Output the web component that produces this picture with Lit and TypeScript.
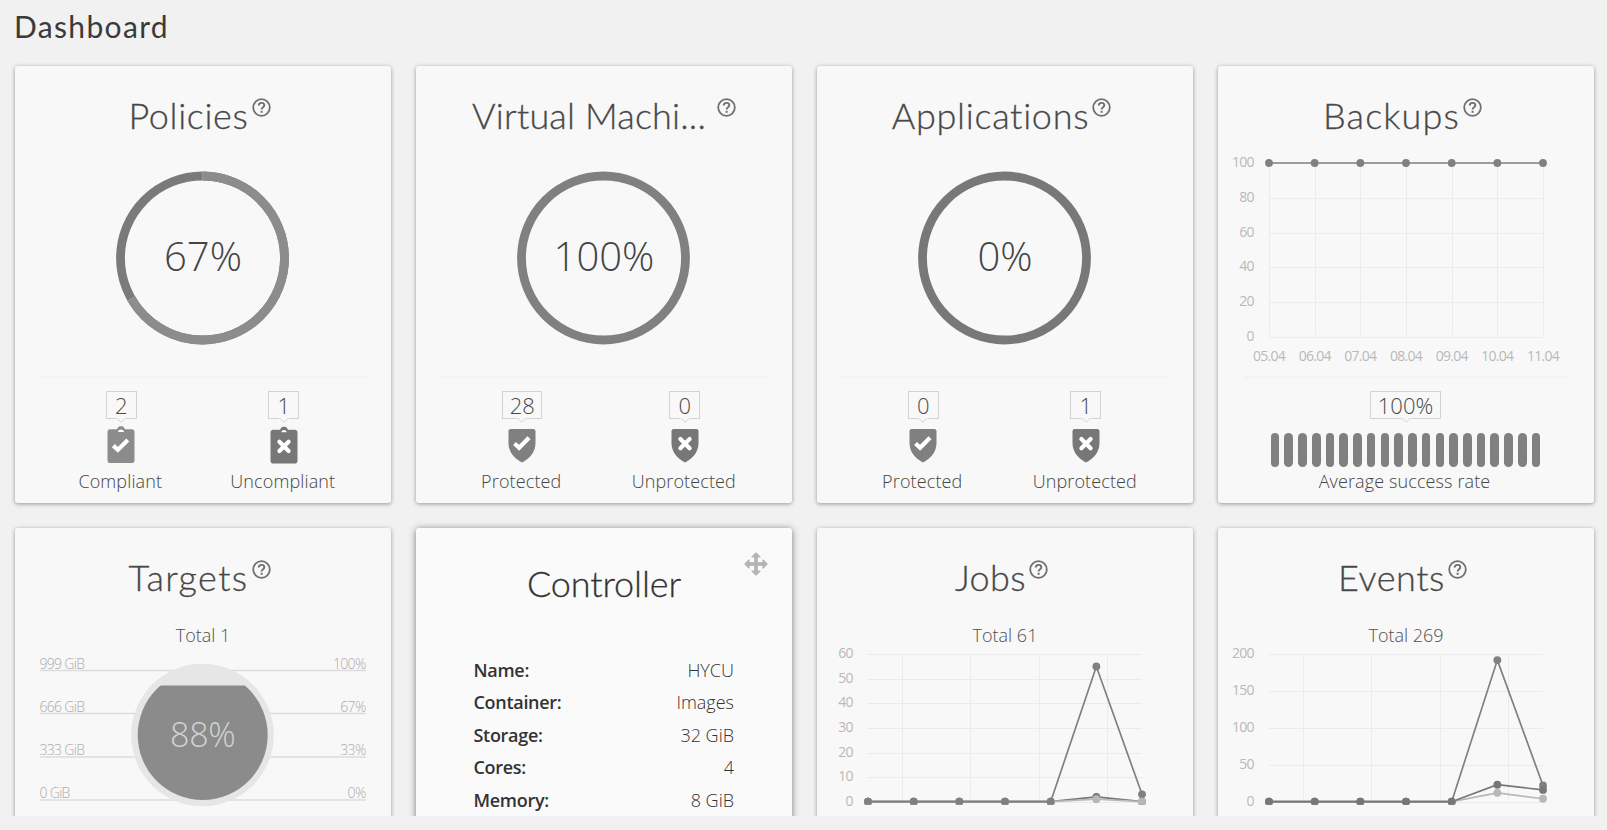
import { LitElement, html, css, svg, nothing } from "lit";
import { customElement, property } from "lit/decorators.js";

const GLYPH_CHECK = svg`<path d="M6.3 20.6 L10.9 24.9 L20.8 14.9" fill="none" stroke="#fff" stroke-width="4.2" stroke-linejoin="miter"/>`;
const GLYPH_CROSS = svg`<path d="M9.4 14.4 l9.2 9.2 M18.6 14.4 l-9.2 9.2" fill="none" stroke="#fff" stroke-width="4.2" stroke-linecap="round"/>`;

/** Title text stretched by letter spacing to a given width. */
@customElement("fit-text")
class FitText extends LitElement {
  @property() text = "";
  @property({ type: Number }) width = 0;

  static styles = css`
    :host { display: inline-block; white-space: pre; }
    .t { display: inline-block; }
  `;

  firstUpdated() {
    const el = this.renderRoot.querySelector(".t") as HTMLElement;
    const natural = el.getBoundingClientRect().width;
    const spacing = (this.width - natural) / this.text.length;
    el.style.letterSpacing = `${spacing.toFixed(3)}px`;
  }

  render() {
    return html`<span class="t">${this.text}</span>`;
  }
}

@customElement("dash-card")
class DashCard extends LitElement {
  @property() heading = "";
  @property({ type: Number }) fit = 0;
  @property({ type: Number }) helpgap = 3;
  @property({ type: Boolean }) plain = false;

  static styles = css`
    :host {
      display: flex;
      flex-direction: column;
      box-sizing: border-box;
      height: 437px;
      background: #f8f8f8;
      border-radius: 3px;
      box-shadow: 0 1px 4px rgba(0, 0, 0, 0.38);
      color: #484848;
    }
    :host([plain]) {
      background: #fafafa;
      box-shadow: 0 1px 7px rgba(0, 0, 0, 0.5);
      color: #333;
    }
    .head {
      display: flex;
      justify-content: center;
      height: 88px;
      padding-right: 7px;
      font: 300 36px/44px "Lato", sans-serif;
      -webkit-text-stroke: 0.3px;
    }
    .name { margin-top: 27px; }
    .help { width: 19px; height: 19px; margin-top: 31.5px; flex: none; }
    :host([plain]) .head { padding-right: 0; }
    :host([wide]) .head { padding-right: 0; }
    :host([plain]) .name { margin-top: 33px; }
  `;

  render() {
    return html`
      <div class="head">
        <fit-text class="name" .text=${this.heading} .width=${this.fit}></fit-text>
        ${this.plain
          ? nothing
          : html`<svg class="help" style="margin-left:${this.helpgap}px" viewBox="0 0 19 19">
              <circle cx="9.5" cy="9.5" r="8.3" fill="none" stroke="#707070" stroke-width="1.8" />
              <path d="M6.7 7.6 C6.7 5.9 8 4.9 9.5 4.9 C11.1 4.9 12.3 5.9 12.3 7.3 C12.3 9.3 9.6 9.2 9.6 11.6"
                fill="none" stroke="#707070" stroke-width="1.9" />
              <rect x="8.6" y="12.8" width="2" height="2" fill="#707070" />
            </svg>`}
      </div>
      <slot></slot>
    `;
  }
}

@customElement("ring-gauge")
class RingGauge extends LitElement {
  @property({ type: Number }) value = 0;
  @property() on = "#8c8c8c";
  @property() off = "#7a7a7a";

  static styles = css`
    :host { display: flex; justify-content: center; padding-top: 17px; height: 199px; }
    svg { width: 174px; height: 174px; }
    text { font: 300 40px "Open Sans", sans-serif; fill: #444; }
  `;

  render() {
    const r = 82;
    const len = 2 * Math.PI * r;
    const part = this.value === 67 ? (len * 2) / 3 : (len * this.value) / 100;
    const partial = this.value > 0 && this.value < 100;
    return html`<svg viewBox="0 0 174 174">
      <circle cx="86.5" cy="87" r=${r} fill="none" stroke=${this.value === 100 ? this.on : this.off} stroke-width="8.8" />
      ${partial
        ? svg`<circle cx="86.5" cy="87" r=${r} fill="none" stroke=${this.on} stroke-width="8.8"
              stroke-dasharray="${part} ${len}" transform="rotate(-90 86.5 87)" />
            <path d="M86.5 0.6 v8.8 M11.7 130.2 l7.6 -4.4" stroke="#aaa" stroke-width="0.7" />`
        : nothing}
      <text x="87" y="100" text-anchor="middle">${this.value}%</text>
    </svg>`;
  }
}

@customElement("stat-item")
class StatItem extends LitElement {
  @property() value = "";
  @property() label = "";
  @property() icon = "";

  static styles = css`
    :host { display: flex; flex-direction: column; align-items: center; flex: 1; }
    .badge {
      position: relative;
      box-sizing: border-box;
      min-width: 31px;
      height: 28px;
      padding: 0 6.5px;
      border: 1px solid #d2d2d2;
      font: 300 22px/27px "Open Sans", sans-serif;
      color: #4a4a4a;
      text-align: center;
    }
    .tip { position: absolute; left: calc(50% - 5px); top: 25px; width: 10px; height: 6px; }
    .icon { width: 28px; height: 39px; margin-top: 6px; }
    .label {
      font: 300 18px/24px "Open Sans", sans-serif;
      letter-spacing: 0.12px;
      margin-top: 5px;
      margin-right: 2px;
      color: #454545;
      white-space: nowrap;
    }
    .bars { display: flex; gap: 5.15px; margin-top: 14px; height: 34px; }
    .bar { width: 8.6px; border-radius: 4.5px; background: #808080; }
    .bars + .label { margin-top: 2px; }
  `;

  drawing() {
    const clip = "M10 4.2 C11 1.6 12.3 1.2 14 1.2 C15.7 1.2 17 1.6 18 4.2 H24.7 Q27.5 4.2 27.5 7 V35.2 Q27.5 38 24.7 38 H3.3 Q0.5 38 0.5 35.2 V7 Q0.5 4.2 3.3 4.2 Z";
    const shield = "M2.8 4 H25.2 Q27.5 4 27.5 6.2 V18 C27.5 27.5 21 34 14 37.5 C7 34 0.5 27.5 0.5 18 V6.2 Q0.5 4 2.8 4 Z";
    switch (this.icon) {
      case "clip-ok":
        return svg`<path d=${clip} fill="#8c8c8c"/><path d="M11 7 C11.5 3.8 16.5 3.8 17 7Z" fill="#fff"/>${GLYPH_CHECK}`;
      case "clip-no":
        return svg`<g transform="translate(0 0.6)"><path d=${clip} fill="#777"/><path d="M11.3 6.6 C11.8 3.8 16.2 3.8 16.7 6.6Z" fill="#fff"/></g><g transform="translate(0 2.3)">${GLYPH_CROSS}</g>`;
      case "shield-ok":
        return svg`<path d=${shield} fill="#808080"/><g transform="translate(0.2 -2.1)">${GLYPH_CHECK}</g>`;
      default:
        return svg`<path d=${shield} fill="#777"/><g transform="translate(0 -0.3)">${GLYPH_CROSS}</g>`;
    }
  }

  render() {
    return html`
      <div class="badge">${this.value}
        <svg class="tip" viewBox="0 0 10 6"><path d="M0 0 H10 V1.2 L5 5.2 L0 1.2Z" fill="#f8f8f8" /><path d="M1 1.4 L5 5.2 L9 1.4" fill="none" stroke="#d2d2d2" /></svg>
      </div>
      ${this.icon === "bars"
        ? html`<div class="bars">${Array.from({ length: 20 }, () => html`<div class="bar"></div>`)}</div>`
        : html`<svg class="icon" viewBox="0 0 28 39">${this.drawing()}</svg>`}
      <div class="label">${this.label}</div>
    `;
  }
}

interface Series { color: string; values: number[]; }

@customElement("line-chart")
class LineChart extends LitElement {
  @property({ attribute: false }) ticks: number[] = [];
  @property({ attribute: false }) labels: string[] = [];
  @property({ attribute: false }) series: Series[] = [];
  @property({ attribute: false }) grid: number[] = [];
  @property({ type: Number }) plot = 174;
  @property({ type: Number }) top = 10;
  @property({ type: Number }) height = 216;

  static styles = css`
    :host { display: block; }
    svg { display: block; width: 376px; overflow: visible; }
    text { font: 400 14px "Open Sans", sans-serif; letter-spacing: -0.75px; fill: #b9b9b9; }
  `;

  render() {
    const x0 = 51, step = 45.67;
    const max = Math.max(...this.ticks);
    const y = (v: number) => this.top + this.plot * (1 - v / max);
    return html`<svg style="height:${this.height}px" viewBox="0 0 376 ${this.height}">
      <defs><clipPath id="area"><rect x="40" y="0" width="300" height=${this.top + this.plot + 3} /></clipPath></defs>
      ${this.ticks.map((t) => svg`
        <line x1=${x0} x2=${x0 + 6 * step} y1=${Math.round(y(t)) + 0.5} y2=${Math.round(y(t)) + 0.5} stroke="#ebebeb"/>
        <text x="35.7" y=${y(t) + 4} text-anchor="end">${t}</text>`)}
      ${this.grid.map((g) => svg`<line x1=${g} x2=${g} y1=${this.top + 1} y2=${this.top + this.plot - 2} stroke="#ebebeb"/>`)}
      ${this.labels.map((l, i) => svg`<text x=${x0 + i * step} y=${this.top + this.plot + 24.3} text-anchor="middle">${l}</text>`)}
      <g clip-path="url(#area)">
      ${this.series.map((s) => svg`
        <polyline fill="none" stroke=${s.color} stroke-width="1.7" points=${s.values.map((v, i) => `${x0 + i * step},${y(v)}`).join(" ")}/>
        ${s.values.map((v, i) => svg`<circle cx=${x0 + i * step} cy=${y(v)} r="3.9" fill=${s.color}/>`)}`)}
      </g>
    </svg>`;
  }
}

@customElement("fill-gauge")
class FillGauge extends LitElement {
  static styles = css`
    svg { display: block; width: 376px; height: 160px; }
    text { font: 300 14px "Open Sans", sans-serif; letter-spacing: -0.7px; fill: #ababab; }
    .pct { font-size: 34px; letter-spacing: -0.2px; fill: #d2d2d2; }
  `;

  render() {
    const rows: [string, string, number][] = [
      ["999 GiB", "100%", 23.5], ["666 GiB", "67%", 66.5], ["333 GiB", "33%", 110], ["0 GiB", "0%", 153],
    ];
    return html`<svg viewBox="0 0 376 160">
      <defs><clipPath id="level"><rect x="100" y="38.6" width="180" height="120" /></clipPath></defs>
      ${rows.map(([l, r, y]) => svg`
        <line x1="25" x2="351" y1=${y} y2=${y} stroke="#dcdcdc" stroke-width="1.3"/>
        <text x="24.5" y=${y - 1.7}>${l}</text>
        <text x="350.5" y=${y - 1.7} text-anchor="end">${r}</text>`)}
      <circle cx="187.5" cy="88" r="71.3" fill="#e6e6e6" />
      <circle cx="187.7" cy="88" r="65" fill="#8b8b8b" clip-path="url(#level)" />
      <text class="pct" x="187.8" y="100" text-anchor="middle">88%</text>
    </svg>`;
  }
}

@customElement("app-root")
class AppRoot extends LitElement {
  static styles = css`
    :host { display: block; height: 830px; background: #f1f1f1; overflow: hidden; font-family: "Open Sans", sans-serif; }
    .page { height: 816px; overflow: hidden; box-sizing: border-box; padding: 0 15px; }
    .title { height: 66px; font: 400 30px/36px "Lato", sans-serif; color: #3a3a3a; box-sizing: border-box; padding-top: 8px; margin-left: -1px; }
    .cards { display: grid; grid-template-columns: repeat(4, 376px); gap: 25px; }
    .stats { display: flex; margin: 0 25px; padding-top: 13px; padding-right: 1px; border-top: 1px solid #f1f1f1; box-shadow: 0 -1px 0 #f5f5f5; }
    .after-ring { margin-top: 7px; }
    .total { text-align: center; font: 300 18px/24px "Open Sans", sans-serif; color: #505050; padding-top: 7px; height: 24px; }
    .rows { padding: 0 58px 0 57.5px; margin-top: 42px; font-size: 18px; line-height: 24px; }
    .row { display: flex; justify-content: space-between; height: 32.4px; }
    .key { font-weight: 600; letter-spacing: -0.3px; }
    .val { font-weight: 300; }
    .wrap { position: relative; }
    .move { position: absolute; right: 24px; top: 24px; width: 24px; height: 24px; }
  `;

  render() {
    const week = ["05.04", "06.04", "07.04", "08.04", "09.04", "10.04", "11.04"];
    const verticals = [85.5, 153.5, 222.5, 290.5];
    return html`<main class="page">
      <div class="title"><fit-text text="Dashboard" .width=${155}></fit-text></div>
      <div class="cards">
        <dash-card heading="Policies" .fit=${120}>
          <ring-gauge .value=${67}></ring-gauge>
          <div class="stats after-ring">
            <stat-item value="2" label="Compliant" icon="clip-ok"></stat-item>
            <stat-item value="1" label="Uncompliant" icon="clip-no"></stat-item>
          </div>
        </dash-card>
        <dash-card heading="Virtual Machi..." wide .fit=${234} .helpgap=${11}>
          <ring-gauge .value=${100} on="#808080"></ring-gauge>
          <div class="stats after-ring">
            <stat-item value="28" label="Protected" icon="shield-ok"></stat-item>
            <stat-item value="0" label="Unprotected" icon="shield-no"></stat-item>
          </div>
        </dash-card>
        <dash-card heading="Applications" .fit=${198}>
          <ring-gauge .value=${0} off="#787878"></ring-gauge>
          <div class="stats after-ring">
            <stat-item value="0" label="Protected" icon="shield-ok"></stat-item>
            <stat-item value="1" label="Unprotected" icon="shield-no"></stat-item>
          </div>
        </dash-card>
        <dash-card heading="Backups" .fit=${137}>
          <line-chart .ticks=${[100, 80, 60, 40, 20, 0]} .labels=${week} .top=${9} .plot=${174} .height=${223}
            .grid=${week.map((_, i) => Math.round(51 + i * 45.67) + 0.5)}
            .series=${[{ color: "#808080", values: [100, 100, 100, 100, 100, 100, 100] }]}></line-chart>
          <div class="stats"><stat-item value="100%" label="Average success rate" icon="bars"></stat-item></div>
        </dash-card>
        <dash-card heading="Targets" .fit=${120}>
          <div class="total">Total 1</div>
          <fill-gauge></fill-gauge>
        </dash-card>
        <dash-card class="wrap" heading="Controller" .fit=${154} plain>
          <svg class="move" viewBox="0 0 24 24" fill="#b4b4b4" stroke="#b4b4b4" stroke-width="1.2" stroke-linejoin="round">
            <path d="M12 1 L16 5 H13.2 V10.8 H19 V8 L23 12 L19 16 V13.2 H13.2 V19 H16 L12 23 L8 19 H10.8 V13.2 H5 V16 L1 12 L5 8 V10.8 H10.8 V5 H8Z" />
          </svg>
          <div class="rows">
            ${[["Name:", "HYCU"], ["Container:", "Images"], ["Storage:", "32 GiB"], ["Cores:", "4"], ["Memory:", "8 GiB"]].map(
              ([k, v]) => html`<div class="row"><span class="key">${k}</span><span class="val">${v}</span></div>`)}
          </div>
        </dash-card>
        <dash-card heading="Jobs" .fit=${71}>
          <div class="total">Total 61</div>
          <line-chart .ticks=${[60, 50, 40, 30, 20, 10, 0]} .top=${7.2} .plot=${147.5} .height=${158} .grid=${verticals}
            .series=${[
              { color: "#808080", values: [0, 0, 0, 0, 0, 55, 3] },
              { color: "#777777", values: [0, 0, 0, 0, 0, 2, 0] },
              { color: "#b8b8b8", values: [0, 0, 0, 0, 0, 1, 0] },
              { color: "#808080", values: [0, 0, 0, 0, 0] },
            ]}></line-chart>
        </dash-card>
        <dash-card heading="Events" .fit=${107}>
          <div class="total">Total 269</div>
          <line-chart .ticks=${[200, 150, 100, 50, 0]} .top=${7.2} .plot=${147.5} .height=${158} .grid=${verticals}
            .series=${[
              { color: "#b8b8b8", values: [0, 0, 0, 0, 0, 12, 4] },
              { color: "#808080", values: [0, 0, 0, 0, 0, 192, 22] },
              { color: "#777777", values: [0, 0, 0, 0, 0, 23, 16] },
            ]}></line-chart>
        </dash-card>
      </div>
    </main>`;
  }
}
